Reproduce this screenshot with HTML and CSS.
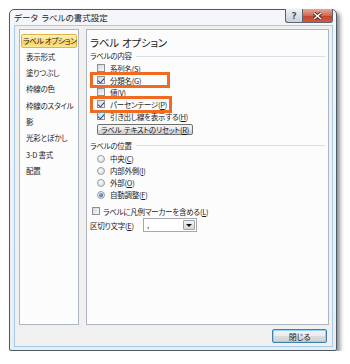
FILE: index.html
```html
<!DOCTYPE html>
<html lang="ja">
<head>
  <meta charset="UTF-8" />
  <title>データ ラベルの書式設定</title>
  <link rel="stylesheet" href="styles.css">
</head>
<body>
  <div class="window">
    <div class="titlebar">
      <span class="title">データ ラベルの書式設定</span>
      <div class="caption-buttons">
        <span class="cap cap-help">?</span>
        <span class="cap cap-close">
          <svg width="9" height="8" viewBox="0 0 9 8"><path d="M1 1 L8 7 M8 1 L1 7" stroke="#3a1a14" stroke-width="3"/><path d="M1 1 L8 7 M8 1 L1 7" stroke="#fff" stroke-width="1.6"/></svg>
        </span>
      </div>
    </div>

    <div class="client">
      <div class="panels">
        <ul class="nav">
          <li class="active">ラベル オプション</li>
          <li>表示形式</li>
          <li>塗りつぶし</li>
          <li>枠線の色</li>
          <li>枠線のスタイル</li>
          <li>影</li>
          <li>光彩とぼかし</li>
          <li>3-D 書式</li>
          <li>配置</li>
        </ul>

        <div class="page">
          <h2>ラベル オプション</h2>

          <div class="group-title">ラベルの内容</div>
          <div class="row"><span class="box"></span>系列名(<u>S</u>)</div>
          <div class="row hl"><span class="box checked"></span>分類名(<u>G</u>)</div>
          <div class="row"><span class="box"></span>値(<u>V</u>)</div>
          <div class="row hl hl-wide"><span class="box checked"></span>パーセンテージ(<u>P</u>)</div>
          <div class="row"><span class="box checked"></span>引き出し線を表示する(<u>H</u>)</div>
          <button class="btn reset">ラベル テキストのリセット(<u>R</u>)</button>

          <div class="group-title second">ラベルの位置</div>
          <div class="radios">
            <div class="row"><span class="radio"></span>中央(<u>C</u>)</div>
            <div class="row"><span class="radio"></span>内部外側(<u>I</u>)</div>
            <div class="row"><span class="radio"></span>外部(<u>O</u>)</div>
            <div class="row"><span class="radio selected"></span>自動調整(<u>F</u>)</div>
          </div>

          <div class="row legend"><span class="box"></span>ラベルに凡例マーカーを含める(<u>L</u>)</div>
          <div class="separator">
            <span class="sep-label">区切り文字(<u>E</u>)</span>
            <div class="combo">
              <span class="combo-value">,</span>
              <span class="combo-arrow"></span>
            </div>
          </div>
        </div>
      </div>

      <div class="footer">
        <button class="btn close">閉じる</button>
      </div>
    </div>
  </div>
</body>
</html>
```

FILE: styles.css
```css
* {
  box-sizing: border-box;
}

body {
  margin: 0;
  background: #fff;
  font-family: "Noto Sans CJK JP", "Noto Sans", sans-serif;
  font-feature-settings: "palt";
  font-size: 7.5px;
  letter-spacing: -0.25px;
  color: #1a1a1a;
}

.window {
  width: 328px;
  height: 342px;
  margin: 9px 0 0 9px;
  border: 1px solid #4f5a66;
  border-radius: 5px 5px 2px 2px;
  background: linear-gradient(#f4f6f9, #e8edf2);
  padding: 0 3px 3px 4px;
  box-shadow: 3px 3px 4px rgba(0, 0, 0, 0.45);
  display: flex;
  flex-direction: column;
}

.titlebar {
  height: 15px;
  display: flex;
  justify-content: space-between;
  align-items: flex-start;
}

.title {
  font-size: 8.5px;
  line-height: 15px;
  letter-spacing: 0;
  word-spacing: 2px;
  color: #222;
}

.caption-buttons {
  display: flex;
  margin-top: -1px;
}

.cap {
  height: 14px;
  display: flex;
  align-items: center;
  justify-content: center;
  border: 1px solid #5b6470;
  border-top: none;
}

.cap-help {
  width: 17px;
  border-radius: 0 0 0 3px;
  border-right: none;
  background: linear-gradient(#eef1f5, #c9d0d8);
  color: #505a66;
  font-family: "DejaVu Sans", sans-serif;
  font-size: 9px;
  font-weight: bold;
}

.cap-close {
  width: 31px;
  border-radius: 0 0 3px 0;
  background: linear-gradient(#e8a898, #d06a55 50%, #c2432c 51%, #d35a3e);
}

.client {
  flex: 1;
  border: 1px solid #a9cbea;
  background: #f0f0f0;
  padding: 3px 3px 3px 4px;
  display: flex;
  flex-direction: column;
}

.panels {
  flex: 1;
  display: flex;
  gap: 7px;
}

.nav {
  width: 60px;
  margin: 0;
  padding: 4px 1px 0;
  list-style: none;
  border: 1px solid #aeb7c1;
  background: #fcfcfd;
}

.nav li {
  height: 16.4px;
  line-height: 16.4px;
  padding-left: 5px;
  white-space: nowrap;
}

.nav li.active {
  height: 14px;
  line-height: 12px;
  margin-bottom: 0.5px;
  padding-left: 1px;
  border: 1px solid #e2b443;
  border-radius: 2px;
  background: linear-gradient(#fef3c4, #fbdc7a 50%, #f8cf55 51%, #fce596);
}

.page {
  flex: 1;
  padding: 6px 3px 0;
  border: 1px solid #aeb7c1;
  background: #fcfcfd;
}

.page h2 {
  margin: 0;
  font-size: 10.5px;
  font-weight: normal;
  line-height: 14px;
  word-spacing: 1px;
}

.group-title {
  display: flex;
  align-items: center;
  line-height: 12px;
}

.group-title::after {
  content: "";
  flex: 1;
  height: 1px;
  margin-left: 4px;
  background: #d8dfe6;
}

.group-title.second {
  margin-top: 4.5px;
}

.row {
  position: relative;
  display: flex;
  align-items: center;
  height: 12.1px;
  padding-left: 7px;
  white-space: nowrap;
}

.radios .row {
  height: 12px;
}

.radios {
  margin-top: 1px;
}

.hl::after {
  content: "";
  position: absolute;
  left: 0;
  top: -2px;
  width: 80px;
  height: 16px;
  box-sizing: border-box;
  border: 3px solid #f26a1f;
}

.hl-wide::after {
  width: 82px;
  height: 17px;
  top: -2.5px;
}

.box {
  width: 8px;
  height: 8px;
  margin-right: 5px;
  border: 1px solid #8d9095;
  background: linear-gradient(135deg, #d5d8dc, #f8f9fa);
  display: flex;
  align-items: center;
  justify-content: center;
}

.box.checked::before {
  content: "";
  width: 3px;
  height: 5px;
  margin-top: -1px;
  border: solid #2a3f8f;
  border-width: 0 1.5px 1.5px 0;
  transform: rotate(40deg);
}

.radio {
  width: 8px;
  height: 8px;
  margin-right: 5px;
  border: 1px solid #9a9ea4;
  border-radius: 50%;
  background: radial-gradient(circle at 40% 35%, #fafbfc, #d0d4d9);
  display: flex;
  align-items: center;
  justify-content: center;
}

.radio.selected::before {
  content: "";
  width: 4px;
  height: 4px;
  border-radius: 50%;
  background: radial-gradient(circle at 40% 35%, #7fb3e8, #1c4f9c);
}

.legend {
  margin-top: 4px;
  padding-left: 2px;
}

.legend .box {
  margin-right: 3px;
}

.btn {
  font-family: inherit;
  font-feature-settings: "palt";
  font-size: 7.5px;
  letter-spacing: -0.25px;
  color: #1a1a1a;
  padding: 0;
  border: 1px solid #707070;
  border-radius: 2px;
  background: linear-gradient(#f4f4f4, #ebebeb 50%, #dcdcdc 51%, #d0d0d0);
  display: flex;
  align-items: center;
  justify-content: center;
  word-spacing: 1px;
}

.reset {
  width: 96px;
  height: 11.5px;
  margin: 1.5px 0 0 7px;
}

.separator {
  display: flex;
  align-items: center;
  height: 14px;
  margin-top: 1px;
}

.sep-label {
  width: 53px;
}

.combo {
  width: 54px;
  height: 14px;
  display: flex;
  border: 1px solid #a3a8ae;
  background: #fff;
}

.combo-value {
  flex: 1;
  padding-left: 3px;
  line-height: 11px;
}

.combo-arrow {
  width: 12px;
  margin: 1px;
  border: 1px solid #9ba3ad;
  border-radius: 1px;
  background: linear-gradient(#f3f3f3, #d6d6d6);
  display: flex;
  align-items: center;
  justify-content: center;
}

.combo-arrow::before {
  content: "";
  border: 3px solid transparent;
  border-top: 3px solid #111;
  border-bottom: none;
}

.footer {
  display: flex;
  justify-content: flex-end;
  margin-top: 4px;
}

.close {
  width: 55px;
  height: 14px;
  margin-right: 2px;
  border-color: #3c7fb1;
  box-shadow: inset 0 0 0 1px #8fd3f5;
  font-size: 8px;
}
```
